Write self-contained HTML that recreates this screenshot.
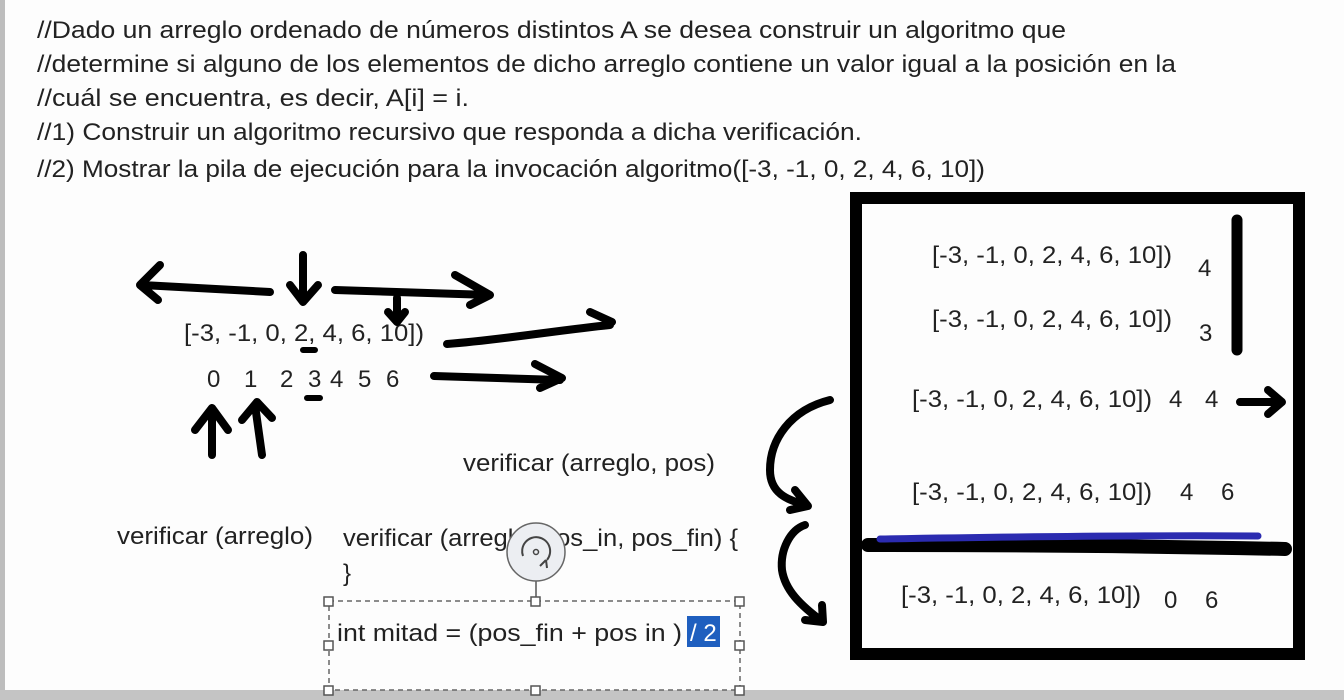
<!DOCTYPE html>
<html><head><meta charset="utf-8"><style>
html,body{margin:0;padding:0;width:1344px;height:700px;overflow:hidden;background:#fff}
svg{display:block}
text{font-family:"Liberation Sans",sans-serif;fill:#222}
</style></head><body>
<svg width="1344" height="700" viewBox="0 0 1344 700">
<rect x="0" y="0" width="1344" height="700" fill="#fdfdfd"/>
<rect x="0" y="0" width="5" height="700" fill="#bdbdbd"/>
<rect x="0" y="690" width="1344" height="10" fill="#c4c4c4"/>
<g font-size="24">
<text x="37" y="38" textLength="1029" lengthAdjust="spacingAndGlyphs">//Dado un arreglo ordenado de números distintos A se desea construir un algoritmo que</text>
<text x="37" y="72" textLength="1139" lengthAdjust="spacingAndGlyphs">//determine si alguno de los elementos de dicho arreglo contiene un valor igual a la posición en la</text>
<text x="37" y="106" textLength="432" lengthAdjust="spacingAndGlyphs">//cuál se encuentra, es decir, A[i] = i.</text>
<text x="37" y="140" textLength="825" lengthAdjust="spacingAndGlyphs">//1) Construir un algoritmo recursivo que responda a dicha verificación.</text>
<text x="37" y="177" textLength="948" lengthAdjust="spacingAndGlyphs">//2) Mostrar la pila de ejecución para la invocación algoritmo([-3, -1, 0, 2, 4, 6, 10])</text>
<text x="184" y="341" textLength="240" lengthAdjust="spacingAndGlyphs">[-3, -1, 0, 2, 4, 6, 10])</text>
<text x="207" y="387">0</text><text x="244" y="387">1</text><text x="280" y="387">2</text><text x="308" y="387">3</text><text x="330" y="387">4</text><text x="358" y="387">5</text><text x="386" y="387">6</text>
<text x="463" y="471" textLength="252" lengthAdjust="spacingAndGlyphs">verificar (arreglo, pos)</text>
<text x="117" y="544" textLength="196" lengthAdjust="spacingAndGlyphs">verificar (arreglo)</text>
<text x="343" y="546" textLength="395" lengthAdjust="spacingAndGlyphs">verificar (arreglo, pos_in, pos_fin) {</text>
<text x="343" y="581">}</text>
<rect x="687" y="616" width="33" height="31" fill="#1f5fbf"/>
<text x="337" y="641" textLength="345" lengthAdjust="spacingAndGlyphs">int mitad = (pos_fin + pos in )</text>
<text x="690" y="641" style="fill:#fff">/ 2</text>
<text x="932" y="263" textLength="240" lengthAdjust="spacingAndGlyphs">[-3, -1, 0, 2, 4, 6, 10])</text>
<text x="1198" y="276">4</text>
<text x="932" y="327" textLength="240" lengthAdjust="spacingAndGlyphs">[-3, -1, 0, 2, 4, 6, 10])</text>
<text x="1199" y="341">3</text>
<text x="912" y="407" textLength="240" lengthAdjust="spacingAndGlyphs">[-3, -1, 0, 2, 4, 6, 10])</text>
<text x="1169" y="407">4</text><text x="1205" y="407">4</text>
<text x="912" y="500" textLength="240" lengthAdjust="spacingAndGlyphs">[-3, -1, 0, 2, 4, 6, 10])</text>
<text x="1180" y="500">4</text><text x="1221" y="500">6</text>
<text x="901" y="603" textLength="240" lengthAdjust="spacingAndGlyphs">[-3, -1, 0, 2, 4, 6, 10])</text>
<text x="1164" y="608">0</text><text x="1205" y="608">6</text>
</g>
<rect x="329" y="601" width="411" height="89" fill="none" stroke="#666" stroke-width="1.5" stroke-dasharray="5,4"/>
<g fill="#fff" stroke="#555" stroke-width="1.5">
<rect x="324" y="597" width="9" height="9"/><rect x="531" y="597" width="9" height="9"/><rect x="735" y="597" width="9" height="9"/>
<rect x="324" y="641" width="9" height="9"/><rect x="735" y="641" width="9" height="9"/>
<rect x="324" y="686" width="9" height="9"/><rect x="531" y="686" width="9" height="9"/><rect x="735" y="686" width="9" height="9"/>
</g>
<line x1="536" y1="580" x2="536" y2="597" stroke="#555" stroke-width="1.5"/>
<circle cx="536" cy="552" r="29" fill="#eceef2" stroke="#666" stroke-width="1.5"/>
<path d="M523 556 A14 14 0 1 1 547 560" fill="none" stroke="#444" stroke-width="2"/>
<path d="M540 566 L546 560 M546 560 L547 568" stroke="#444" stroke-width="2"/>
<circle cx="536" cy="552" r="2.5" fill="none" stroke="#444" stroke-width="1.5"/>
<g fill="none" stroke="#000" stroke-width="8" stroke-linecap="round" stroke-linejoin="round">
<path d="M270 292 L142 285 M160 265 L140 285 L158 300"/>
<path d="M303 255 L303 300 M290 285 L303 302 L318 285"/>
<path d="M335 290 L490 295 M455 275 L490 295 L470 305"/>
<path d="M397 298 L397 320 M388 312 L397 322 L405 312"/>
<path d="M447 344 C500 340 560 330 610 325 M590 312 L612 322"/>
<path d="M434 376 L560 380 M535 364 L562 378 L540 388"/>
<path d="M212 455 L212 410 M195 430 L212 408 L228 430"/>
<path d="M262 455 L255 405 M242 420 L257 402 L272 418"/>
<path d="M303 350 L315 350 M307 398 L320 398" stroke-width="6"/>
<path d="M830 400 C790 410 770 440 770 470 C770 495 790 500 805 505 M795 490 L808 506 L790 510"/>
<path d="M805 525 C790 530 780 550 782 570 C785 590 800 605 823 622 M805 620 L823 622 L822 605"/>
<path d="M1237 220 L1237 350" stroke-width="11"/>
<path d="M1240 402 L1280 402 M1268 390 L1282 402 L1268 414"/>
</g>
<rect x="856" y="198" width="443" height="456" fill="none" stroke="#000" stroke-width="12"/>
<path d="M868 545 C1000 545 1150 546 1285 549" stroke="#000" stroke-width="14" fill="none" stroke-linecap="round"/>
<path d="M880 539 C1000 537 1150 535 1258 536" stroke="#2b2bb0" stroke-width="7" fill="none" stroke-linecap="round"/>
</svg>
</body></html>
